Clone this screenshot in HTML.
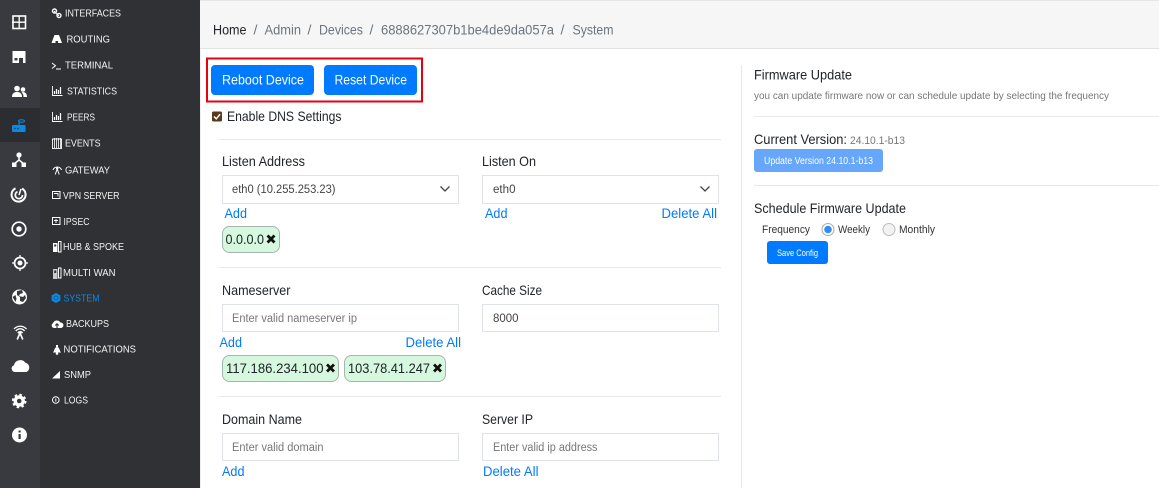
<!DOCTYPE html>
<html><head><meta charset="utf-8"><style>
html,body{margin:0;padding:0;background:#fff;width:1159px;height:488px;overflow:hidden}
svg{display:block}
text{font-family:"Liberation Sans",sans-serif}
.n{font-size:10.5px;fill:#f2f2f2}
.b{font-size:14px;fill:#212529}
.g{font-size:14px;fill:#6c757d}
.l{font-size:14px;fill:#212529}
.a{font-size:14px;fill:#007bff}
.p{font-size:11.5px;fill:#777}
.v{font-size:11.5px;fill:#444}
.w{font-size:14px;fill:#fff}
.f{fill:#fff;stroke:#dfe2e6}
.c{fill:#d6f8de;stroke:#a6b5ab}
.x{stroke:#111;stroke-width:2.8;fill:none}
.i{fill:#fff}
.s{fill:none;stroke:#fff}
</style></head><body>
<svg width="1159" height="488" viewBox="0 0 1159 488" xmlns="http://www.w3.org/2000/svg">
<rect width="1159" height="488" fill="#fff"/>
<rect x="0" y="0" width="40" height="488" fill="#383a40"/>
<rect x="40" y="0" width="160" height="488" fill="#303135"/>
<rect x="0" y="108" width="40" height="34" fill="#2c2d31"/>

<!-- left icons -->
<rect x="13" y="16" width="12.500" height="12.500" class="s" stroke-width="1.600"/><path d="M19.200 16v13M12 22.200h14" class="s" stroke-width="1.300"/>
<rect x="12.500" y="51" width="13" height="5.500" class="i"/><rect x="12.500" y="56" width="13" height="7" class="i"/><rect x="19" y="58" width="4" height="5" fill="#383a40"/><rect x="14.500" y="58" width="3" height="2.500" fill="#383a40"/>
<circle cx="17" cy="88.500" r="2.800" class="i"/><path d="M12 97c0-3.500 2-5 5-5s5 1.500 5 5z" class="i"/><circle cx="23" cy="89.500" r="2.300" class="i"/><path d="M23.500 97c0-2-.5-3.500-2-4.700 3-1 5.500.8 5.500 4.700z" class="i"/>
<rect x="12" y="125" width="13.500" height="7" rx="1" fill="#0a8ae6"/><path d="M19 125v-3" stroke="#0a8ae6" stroke-width="1"/><ellipse cx="21.500" cy="121" rx="3" ry="1.300" fill="none" stroke="#0a8ae6"/><circle cx="15" cy="128.500" r=".8" fill="#2c2d31"/><circle cx="18" cy="128.500" r=".8" fill="#2c2d31"/>
<circle cx="19" cy="155" r="2.600" class="i"/><rect x="12" y="162.500" width="4.500" height="4.500" class="i"/><rect x="21.500" y="162.500" width="4.500" height="4.500" class="i"/><path d="M19 155v5l-5 4M19 160l5 4" class="s" stroke-width="1.500"/>
<path d="M22 188.500a7 7 0 1 1-6.500-.2" class="s" stroke-width="2"/><path d="M22.500 195a3.600 3.600 0 1 1-5-3.300" class="s" stroke-width="1.800"/><path d="M19 195l2-6" class="s" stroke-width="1.500"/>
<circle cx="19" cy="229" r="6.800" class="s" stroke-width="1.700"/><circle cx="19" cy="229" r="2.700" class="i"/>
<circle cx="20" cy="263" r="5.500" class="s" stroke-width="1.800"/><circle cx="20" cy="263" r="2.500" class="i"/><path d="M20 255v3M20 268v3M12 263h3M25 263h3" class="s" stroke-width="1.300"/>
<circle cx="19.500" cy="297" r="7.500" class="i"/><path d="M17 291l5-1 1 3-3 1-1 2 4 1 2-2 1 3-3 4-3-1 0-4-3-2zM12.500 297l3-2 1 4-1 3z" fill="#383a40"/>
<path d="M14 329a8.500 8.500 0 0 1 12.500 0M15.800 331a5.500 5.500 0 0 1 8.800 0M17.800 333a2.800 2.800 0 0 1 4.800 0" class="s" stroke-width="1.300"/><path d="M20 333l-2.800 6.500M20 333l2.800 6.500" class="s" stroke-width="1.600"/><circle cx="20" cy="333" r="1.500" class="i"/>
<path d="M15 372a3.500 3.500 0 0 1-1-6.800 6.500 6.500 0 0 1 11.500-2.500 5 5 0 0 1 1 9.300z" class="i"/>
<circle cx="19.200" cy="401" r="4" fill="none" stroke="#fff" stroke-width="3.400"/><circle cx="19.200" cy="401" r="6.300" fill="none" stroke="#fff" stroke-width="2" stroke-dasharray="2.500 2.448"/>
<circle cx="19.500" cy="435" r="7.500" class="i"/><rect x="18.500" y="434" width="2.200" height="5" fill="#383a40"/><rect x="18.500" y="430.500" width="2.200" height="2" fill="#383a40"/>

<!-- nav small icons -->
<path d="M54 11l5 5" stroke="#fff" stroke-width="1"/><circle cx="54.500" cy="11" r="2" class="s" stroke-width="1.400"/><circle cx="59" cy="15.500" r="2" class="s" stroke-width="1.400"/>
<path d="M54.500 35h4.500l3 8h-4v-2h-2.500v2h-4z" class="i"/>
<path d="M52 63l3.500 2.700L52 68.500" class="s" stroke-width="1"/><path d="M56 69h5" class="s" stroke-width="1"/>
<path d="M52.500 86v9.500h10" class="s" stroke-width=".9"/><path d="M54.500 94v-3M56.500 94v-5M58.500 94v-4M60.500 94v-7" class="s" stroke-width="1.200"/>
<path d="M52.500 112v9.500h10" class="s" stroke-width=".9"/><path d="M54.500 120v-3M56.500 120v-5M58.500 120v-4M60.500 120v-7" class="s" stroke-width="1.200"/>
<rect x="52.500" y="139" width="9" height="9.500" class="s" stroke-width=".9"/><path d="M54.500 138v10M56.500 138v10M58.500 138v10M60.500 138v10" class="s" stroke-width=".8"/>
<path d="M53 170a4.500 4.500 0 0 1 8.500 0M57.200 169l-2 5.500M57.200 169l2 5.500" class="s" stroke-width="1"/><circle cx="57.200" cy="168.500" r="1.200" class="i"/>
<rect x="52.500" y="191.500" width="7.500" height="7" class="s" stroke-width="1"/><path d="M54 193.500h4v3" class="s" stroke-width=".9"/>
<rect x="52.500" y="217.500" width="7.500" height="7" class="s" stroke-width="1"/><path d="M54 220.500h4M56 219v4" class="s" stroke-width=".9"/>
<path d="M53 243h4.500v9H53z" class="i"/><rect x="54.200" y="244.500" width="2" height="2" fill="#303135"/><path d="M58.500 241.500h2.500v10.500h-2.500z" class="s" stroke-width="1"/>
<path d="M53 269h4.500v10H53z" fill="#ccc"/><rect x="54.200" y="270.500" width="2" height="2.500" fill="#303135"/><path d="M58.500 268h2.500v10h-2.500z" class="s" stroke-width="1"/>
<circle cx="56" cy="298" r="3.500" fill="none" stroke="#0a8ae6" stroke-width="2"/><path d="M56 293v10M51.500 295.500l9 5M60.500 295.500l-9 5" stroke="#0a8ae6" stroke-width="1.200"/>
<path d="M54 328a2.500 2.500 0 0 1-1-4.700 4 4 0 0 1 7.300-.8 2.800 2.800 0 0 1 1 5.500z" class="i"/><path d="M57 328v-4M55.300 325.500l1.700-1.700 1.700 1.700" stroke="#303135" stroke-width="1.100" fill="none"/>
<path d="M52.800 352.500c1.800-1 1-5 4.200-5.500 3.200.5 2.400 4.500 4.200 5.500z" class="i"/><rect x="56" y="345" width="2" height="2.200" class="i"/><circle cx="57" cy="353.500" r="1.300" class="i"/>
<path d="M52 378.500l8-7.500v7.500z" class="i"/>
<circle cx="55.800" cy="400" r="3.300" class="s" stroke-width="1"/><rect x="55.300" y="398.500" width="1" height="3" class="i"/>

<!-- nav labels -->
<text x="65" y="16.500" class="n" textLength="56" lengthAdjust="spacingAndGlyphs">INTERFACES</text>
<text x="66.500" y="42.500" class="n" textLength="43.500" lengthAdjust="spacingAndGlyphs">ROUTING</text>
<text x="65" y="68.500" class="n" textLength="48" lengthAdjust="spacingAndGlyphs">TERMINAL</text>
<text x="67" y="94.500" class="n" textLength="50" lengthAdjust="spacingAndGlyphs">STATISTICS</text>
<text x="67" y="120.500" class="n" textLength="28" lengthAdjust="spacingAndGlyphs">PEERS</text>
<text x="65" y="146.500" class="n" textLength="35.500" lengthAdjust="spacingAndGlyphs">EVENTS</text>
<text x="65" y="173.500" class="n" textLength="45" lengthAdjust="spacingAndGlyphs">GATEWAY</text>
<text x="63" y="199" class="n" textLength="56.500" lengthAdjust="spacingAndGlyphs">VPN SERVER</text>
<text x="63.500" y="225" class="n" textLength="26" lengthAdjust="spacingAndGlyphs">IPSEC</text>
<text x="63" y="250" class="n" textLength="61" lengthAdjust="spacingAndGlyphs">HUB &amp; SPOKE</text>
<text x="63" y="276" class="n" textLength="52.500" lengthAdjust="spacingAndGlyphs">MULTI WAN</text>
<text x="63.500" y="301.500" class="n" style="fill:#0a8ae6" textLength="36" lengthAdjust="spacingAndGlyphs">SYSTEM</text>
<text x="66" y="327" class="n" textLength="43" lengthAdjust="spacingAndGlyphs">BACKUPS</text>
<text x="63.500" y="352.500" class="n" textLength="72.500" lengthAdjust="spacingAndGlyphs">NOTIFICATIONS</text>
<text x="64" y="378" class="n" textLength="27" lengthAdjust="spacingAndGlyphs">SNMP</text>
<text x="64" y="403.500" class="n" textLength="24" lengthAdjust="spacingAndGlyphs">LOGS</text>

<!-- header -->
<rect x="200" y="0" width="959" height="48" fill="#f6f6f6"/>
<rect x="200" y="0" width="959" height="1" fill="#e6e6e6"/>
<rect x="200" y="48" width="959" height="1" fill="#e2e2e2"/>
<rect x="200" y="49" width="1" height="439" fill="#f0f0f0"/>
<text x="213" y="34.500" class="b" textLength="33.500" lengthAdjust="spacingAndGlyphs">Home</text>
<text x="253.500" y="34.500" class="g">/</text>
<text x="264.500" y="34.500" class="g" textLength="36.500" lengthAdjust="spacingAndGlyphs">Admin</text>
<text x="307.500" y="34.500" class="g">/</text>
<text x="319" y="34.500" class="g" textLength="44" lengthAdjust="spacingAndGlyphs">Devices</text>
<text x="369.500" y="34.500" class="g">/</text>
<text x="381" y="34.500" class="g" textLength="173" lengthAdjust="spacingAndGlyphs">6888627307b1be4de9da057a</text>
<text x="560.500" y="34.500" class="g">/</text>
<text x="572.500" y="34.500" class="g" textLength="41" lengthAdjust="spacingAndGlyphs">System</text>

<!-- red box & buttons -->
<rect x="207" y="58.500" width="215" height="43" fill="none" stroke="#e60012" stroke-width="2"/>
<rect x="211" y="65" width="103" height="30" rx="4" fill="#007bff"/>
<rect x="324" y="65" width="93" height="30" rx="4" fill="#007bff"/>
<text x="222" y="84.500" class="w" textLength="82" lengthAdjust="spacingAndGlyphs">Reboot Device</text>
<text x="334.500" y="84.500" class="w" textLength="72.500" lengthAdjust="spacingAndGlyphs">Reset Device</text>

<rect x="212" y="111.500" width="10" height="10" rx="1.500" fill="#5a3a1c"/><path d="M214 116.500l2.300 2.300 3.800-4.600" fill="none" stroke="#fff" stroke-width="1.500"/>
<text x="227" y="121" class="l" textLength="114.500" lengthAdjust="spacingAndGlyphs">Enable DNS Settings</text>
<rect x="219" y="139" width="502" height="1" fill="#e8e8e8"/>

<!-- listen -->
<text x="222" y="166" class="l" textLength="83" lengthAdjust="spacingAndGlyphs">Listen Address</text>
<text x="482" y="166" class="l" textLength="54" lengthAdjust="spacingAndGlyphs">Listen On</text>
<rect x="222.500" y="175.500" width="236" height="28" class="f"/>
<rect x="482.500" y="175.500" width="236" height="28" class="f"/>
<text x="232" y="193" class="v" textLength="103.500" lengthAdjust="spacingAndGlyphs">eth0 (10.255.253.23)</text>
<text x="493" y="193" class="v" textLength="22.500" lengthAdjust="spacingAndGlyphs">eth0</text>
<path d="M440.500 186.500l4.500 4.500 4.500-4.500M700.500 186.500l4.500 4.500 4.500-4.500" fill="none" stroke="#444" stroke-width="1.300"/>
<text x="224.500" y="218" class="a" textLength="22.500" lengthAdjust="spacingAndGlyphs">Add</text>
<text x="485" y="218" class="a" textLength="22.500" lengthAdjust="spacingAndGlyphs">Add</text>
<text x="661.500" y="218" class="a" textLength="55.500" lengthAdjust="spacingAndGlyphs">Delete All</text>
<rect x="222.500" y="226.500" width="57" height="26" rx="7" class="c"/>
<text x="225.500" y="244" class="l" textLength="38.500" lengthAdjust="spacingAndGlyphs">0.0.0.0</text>
<path d="M267.500 235.500l7 7M274.500 235.500l-7 7" class="x"/>
<rect x="219" y="267" width="502" height="1" fill="#e8e8e8"/>

<!-- nameserver -->
<text x="222" y="295" class="l" textLength="68.500" lengthAdjust="spacingAndGlyphs">Nameserver</text>
<text x="482" y="295" class="l" textLength="60" lengthAdjust="spacingAndGlyphs">Cache Size</text>
<rect x="222.500" y="304.500" width="236" height="27" class="f"/>
<rect x="482.500" y="304.500" width="236" height="27" class="f"/>
<text x="232" y="322" class="p" textLength="125" lengthAdjust="spacingAndGlyphs">Enter valid nameserver ip</text>
<text x="493" y="322" class="v" textLength="25.500" lengthAdjust="spacingAndGlyphs">8000</text>
<text x="219.500" y="347" class="a" textLength="22.500" lengthAdjust="spacingAndGlyphs">Add</text>
<text x="405.500" y="347" class="a" textLength="55.500" lengthAdjust="spacingAndGlyphs">Delete All</text>
<rect x="222.500" y="355.500" width="116" height="26" rx="7" class="c"/>
<rect x="344.500" y="355.500" width="101" height="26" rx="7" class="c"/>
<text x="226" y="373" class="l" textLength="97.500" lengthAdjust="spacingAndGlyphs">117.186.234.100</text>
<path d="M327 364.500l7 7M334 364.500l-7 7" class="x"/>
<text x="348" y="373" class="l" textLength="82" lengthAdjust="spacingAndGlyphs">103.78.41.247</text>
<path d="M434 364.500l7 7M441 364.500l-7 7" class="x"/>
<rect x="219" y="396" width="502" height="1" fill="#e8e8e8"/>

<!-- domain -->
<text x="222" y="424" class="l" textLength="80" lengthAdjust="spacingAndGlyphs">Domain Name</text>
<text x="482" y="424" class="l" textLength="51" lengthAdjust="spacingAndGlyphs">Server IP</text>
<rect x="222.500" y="433.500" width="236" height="27" class="f"/>
<rect x="482.500" y="433.500" width="236" height="27" class="f"/>
<text x="232" y="451" class="p" textLength="91.500" lengthAdjust="spacingAndGlyphs">Enter valid domain</text>
<text x="493" y="451" class="p" textLength="104.500" lengthAdjust="spacingAndGlyphs">Enter valid ip address</text>
<text x="222" y="476" class="a" textLength="22.500" lengthAdjust="spacingAndGlyphs">Add</text>
<text x="483" y="476" class="a" textLength="55.500" lengthAdjust="spacingAndGlyphs">Delete All</text>

<!-- right -->
<rect x="741" y="65" width="1" height="423" fill="#e8e8e8"/>
<text x="754" y="79.500" class="l" textLength="98" lengthAdjust="spacingAndGlyphs">Firmware Update</text>
<text x="754" y="99" style="font-size:10.500px;fill:#777" textLength="355" lengthAdjust="spacingAndGlyphs">you can update firmware now or can schedule update by selecting the frequency</text>
<rect x="754" y="116" width="405" height="1" fill="#e8e8e8"/>
<text x="754" y="144" class="l" textLength="93" lengthAdjust="spacingAndGlyphs">Current Version:</text>
<text x="850" y="144" style="font-size:11px;fill:#777" textLength="55" lengthAdjust="spacingAndGlyphs">24.10.1-b13</text>
<rect x="754" y="149" width="129" height="23" rx="3" fill="#66a6fb"/>
<text x="764" y="164" style="font-size:10px;fill:#fff" textLength="109" lengthAdjust="spacingAndGlyphs">Update Version 24.10.1-b13</text>
<rect x="754" y="185" width="405" height="1" fill="#e8e8e8"/>
<text x="754" y="213" class="l" textLength="152" lengthAdjust="spacingAndGlyphs">Schedule Firmware Update</text>
<text x="762" y="233" style="font-size:11px;fill:#333" textLength="48" lengthAdjust="spacingAndGlyphs">Frequency</text>
<circle cx="828" cy="229.500" r="6" fill="#fff" stroke="#aaa"/><circle cx="828" cy="229.500" r="3.800" fill="#2f8ff0"/>
<text x="838" y="233" style="font-size:11px;fill:#333" textLength="32" lengthAdjust="spacingAndGlyphs">Weekly</text>
<circle cx="889" cy="229.500" r="6" fill="#f2f2f2" stroke="#bbb"/>
<text x="899" y="233" style="font-size:11px;fill:#333" textLength="36" lengthAdjust="spacingAndGlyphs">Monthly</text>
<rect x="767" y="241" width="61" height="23" rx="3" fill="#007bff"/>
<text x="777" y="256" style="font-size:9px;fill:#fff" textLength="41" lengthAdjust="spacingAndGlyphs">Save Config</text>
</svg>
</body></html>
